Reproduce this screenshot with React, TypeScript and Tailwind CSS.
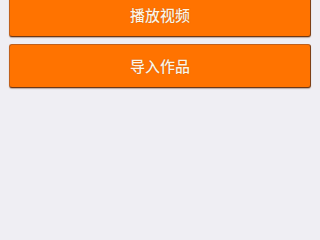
import React from "react";

export default function App() {
  const btn =
    "h-[44px] w-full flex items-center justify-center rounded-[3px] bg-[#ff7300] border border-[#c0601c] border-b-[#6e3816] border-r-[#7e4016] shadow-[0_1px_1px_rgba(90,40,10,0.35)] text-[15px] font-medium text-[#fff4e4] [text-shadow:0_0_1px_rgba(120,50,0,0.6)]";
  return (
    <div
      className="w-[320px] h-[240px] overflow-hidden bg-[#efeef3]"
      style={{ fontFamily: '"Noto Sans CJK SC", "Noto Sans", sans-serif' }}
    >
      <div className="flex flex-col gap-[7px] px-[9px] -mt-[7px]">
        <div className={btn}>播放视频</div>
        <div className={btn}>导入作品</div>
      </div>
    </div>
  );
}
